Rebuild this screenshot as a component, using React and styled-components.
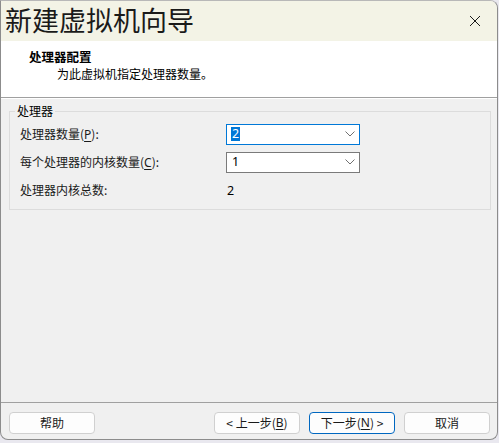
import React from "react";
import styled, { createGlobalStyle } from "styled-components";

const Global = createGlobalStyle`
  html, body { margin: 0; padding: 0; }
  body {
    background: #e9e8ef;
    width: 499px;
    height: 443px;
    overflow: hidden;
    font-family: "Segoe UI", "Noto Sans", "Noto Sans CJK SC", sans-serif;
    font-size: 12px;
    color: #000;
  }
`;

const Window = styled.div`
  box-sizing: border-box;
  width: 498px;
  height: 440px;
  display: flex;
  flex-direction: column;
  border: 1px solid #8c8c8c;
  border-top-color: #b8b8b8;
  border-radius: 0 8px 8px 8px;
  overflow: hidden;
  background: #f0f0f0;
`;

const TitleBar = styled.div`
  height: 40px;
  flex: none;
  display: flex;
  align-items: center;
  justify-content: space-between;
  background: #f3f3e6;
  padding: 0 16px 0 4px;
`;

const Title = styled.div`
  font-family: "Noto Sans CJK SC", sans-serif;
  font-size: 27px;
  line-height: 40px;
  color: #1a1a1a;
  margin-top: -2px;
`;

const CloseButton = styled.div`
  width: 12px;
  height: 12px;
  display: flex;
  align-items: center;
  justify-content: center;
`;

const Header = styled.div`
  flex: none;
  background: #fff;
  border-bottom: 1px solid #a0a0a0;
  padding: 7px 0 0 28px;
  box-sizing: border-box;
  height: 57px;
`;

const HeaderTitle = styled.div`
  font-family: "Noto Sans CJK SC", sans-serif;
  font-weight: 700;
  font-size: 12.5px;
  line-height: 17px;
`;

const HeaderSub = styled.div`
  font-family: "Noto Sans CJK SC", sans-serif;
  font-size: 12px;
  line-height: 17px;
  padding-left: 28px;
`;

const Body = styled.div`
  flex: 1;
  padding: 5px 8px 0 8px;
  border-top: 1px solid #fff;
`;

const Group = styled.fieldset`
  margin: 0;
  box-sizing: border-box;
  width: 482px;
  height: 106px;
  border: 1px solid #dcdcdc;
  padding: 2px 10px 0 10px;
  min-width: 0;
`;

const Legend = styled.legend`
  font-family: "Noto Sans CJK SC", sans-serif;
  font-size: 12px;
  line-height: 14px;
  padding: 0 2px;
  margin-left: -5px;
`;

const Row = styled.div`
  display: grid;
  grid-template-columns: 206px 134px;
  align-items: center;
  height: 28px;
`;

const Label = styled.div`
  font-family: "Noto Sans CJK SC", sans-serif;
  font-size: 12px;
  line-height: 16px;
  white-space: nowrap;
  color: #1a1a1a;
`;

const Key = styled.span`
  text-decoration: underline;
  text-underline-offset: 2px;
  font-family: "Segoe UI", "Noto Sans", sans-serif;
`;

const Combo = styled.div`
  box-sizing: border-box;
  width: 134px;
  height: 21px;
  background: #fff;
  border: 1px solid ${(p) => (p.$focused ? "#0078d7" : "#7a7a7a")};
  display: flex;
  align-items: center;
  justify-content: space-between;
  padding: 0 4px 0 4px;
`;

const ComboText = styled.span`
  font-family: "Segoe UI", "Noto Sans", sans-serif;
  font-size: 12.5px;
  line-height: 14px;
  padding: 0 1px;
  background: ${(p) => (p.$selected ? "#0078d7" : "transparent")};
  color: ${(p) => (p.$selected ? "#fff" : "#000")};
`;

const Value = styled.div`
  font-family: "Segoe UI", "Noto Sans", sans-serif;
  font-size: 12.5px;
  padding-left: 1px;
`;

const Footer = styled.div`
  flex: none;
  height: 37px;
  box-sizing: border-box;
  border-top: 1px solid #a0a0a0;
  padding: 9px 7px 0 8px;
  display: flex;
  align-items: flex-start;
`;

const Button = styled.button`
  box-sizing: border-box;
  width: 86px;
  height: 22px;
  border-radius: 4px;
  border: 1px solid ${(p) => (p.$primary ? "#0067c0" : "#d0d0d0")};
  background: #fdfdfd;
  font-family: "Noto Sans CJK SC", sans-serif;
  font-size: 12px;
  line-height: 14px;
  color: #1a1a1a;
  padding: 0;
  margin-left: ${(p) => p.$ml || 0}px;
  display: flex;
  align-items: center;
  justify-content: center;
`;

const Chevron = () => (
  <svg width="10" height="6" viewBox="0 0 10 6">
    <path d="M0.5 0.5 L5 5 L9.5 0.5" fill="none" stroke="#707070" strokeWidth="1" />
  </svg>
);

export default function App() {
  return (
    <>
      <Global />
      <Window>
        <TitleBar>
          <Title>新建虚拟机向导</Title>
          <CloseButton>
            <svg width="12" height="12" viewBox="0 0 12 12">
              <path d="M1 1 L11 11 M11 1 L1 11" stroke="#1a1a1a" strokeWidth="1" fill="none" />
            </svg>
          </CloseButton>
        </TitleBar>
        <Header>
          <HeaderTitle>处理器配置</HeaderTitle>
          <HeaderSub>为此虚拟机指定处理器数量。</HeaderSub>
        </Header>
        <Body>
          <Group>
            <Legend>处理器</Legend>
            <Row>
              <Label>
                处理器数量(<Key>P</Key>):
              </Label>
              <Combo $focused>
                <ComboText $selected>2</ComboText>
                <Chevron />
              </Combo>
            </Row>
            <Row>
              <Label>
                每个处理器的内核数量(<Key>C</Key>):
              </Label>
              <Combo>
                <ComboText>1</ComboText>
                <Chevron />
              </Combo>
            </Row>
            <Row>
              <Label>处理器内核总数:</Label>
              <Value>2</Value>
            </Row>
          </Group>
        </Body>
        <Footer>
          <Button>帮助</Button>
          <Button $ml={119}>
            &lt; 上一步(<Key>B</Key>)
          </Button>
          <Button $primary $ml={9}>
            下一步(<Key>N</Key>) &gt;
          </Button>
          <Button $ml={9}>取消</Button>
        </Footer>
      </Window>
    </>
  );
}
